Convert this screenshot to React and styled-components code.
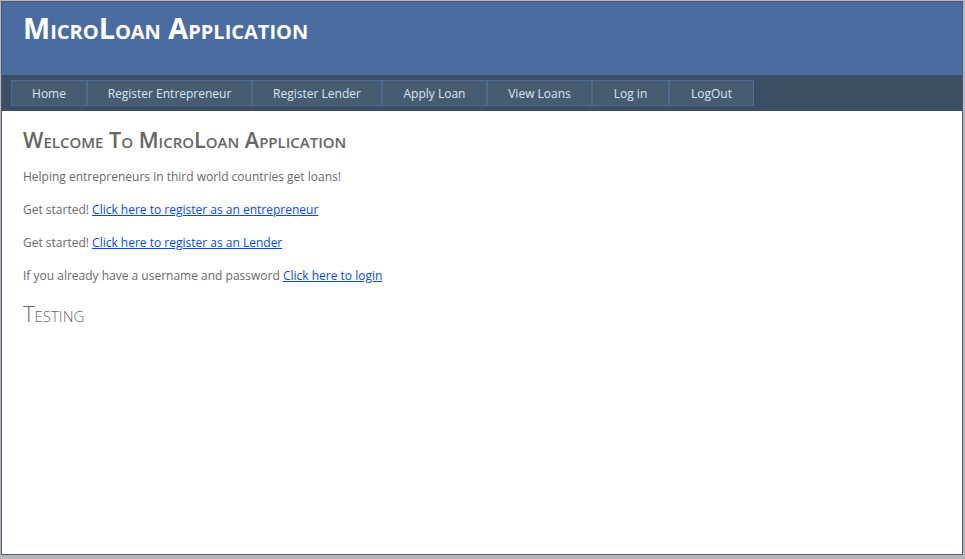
import React from "react";
import styled, { createGlobalStyle } from "styled-components";

const GlobalStyle = createGlobalStyle`
  body {
    margin: 0;
    background: #b6b7bc;
    font-family: "Open Sans", "Noto Sans", sans-serif;
    font-size: 12px;
    color: #696969;
  }
`;

const Page = styled.div`
  margin: 1px 0 0 1px;
  width: 960px;
  height: 552px;
  border: 1px solid #4a5d70;
  background: #fff;
  display: flex;
  flex-direction: column;
`;

const Header = styled.div`
  background: #4b6c9e;
`;

const Title = styled.h1`
  margin: 0;
  height: 73px;
  padding: 10px 0 0 21px;
  box-sizing: border-box;
  font-size: 28.8px;
  line-height: 32px;
  font-weight: bold;
  font-variant: small-caps;
  color: #fff;
`;

const MenuBar = styled.div`
  background: #3a4f63;
  height: 36px;
  padding: 5px 0 0 9px;
  box-sizing: border-box;
  display: flex;
`;

const MenuItem = styled.a`
  display: block;
  width: ${(props) => props.w}px;
  height: 26px;
  box-sizing: border-box;
  background: #465c71;
  border: 1px solid #4c6c96;
  border-left-color: ${(props) => (props.first ? "#4c6c96" : "#506a87")};
  color: #dde4ec;
  font-size: 12px;
  line-height: 25px;
  text-align: center;
  text-decoration: none;
  white-space: nowrap;
`;

const Main = styled.div`
  padding: 16px 21px 0;
`;

const Heading = styled.h2`
  margin: 0 0 15px;
  font-size: 21.6px;
  line-height: 26px;
  font-weight: 600;
  font-variant: small-caps;
  color: #666;
`;

const Para = styled.p`
  margin: 0 0 15px;
  line-height: 18px;
`;

const Link = styled.a`
  color: #034af3;
  text-decoration: underline;
`;

const SubHeading = styled.h2`
  margin: 0;
  font-size: 22px;
  line-height: 26px;
  font-weight: 300;
  font-variant: small-caps;
  color: #666;
`;

const menu = [
  ["Home", 76],
  ["Register Entrepreneur", 165],
  ["Register Lender", 130],
  ["Apply Loan", 105],
  ["View Loans", 105],
  ["Log in", 77],
  ["LogOut", 85],
];

const App = () => {
  return (
    <>
      <GlobalStyle />
      <Page>
        <Header>
          <Title>MicroLoan Application</Title>
          <MenuBar>
            {menu.map(([label, w], i) => (
              <MenuItem key={label} href="#" w={w} first={i === 0}>
                {label}
              </MenuItem>
            ))}
          </MenuBar>
        </Header>
        <Main>
          <Heading>Welcome To MicroLoan Application</Heading>
          <Para>Helping entrepreneurs in third world countries get loans!</Para>
          <Para>
            Get started! <Link href="#">Click here to register as an entrepreneur</Link>
          </Para>
          <Para>
            Get started! <Link href="#">Click here to register as an Lender</Link>
          </Para>
          <Para>
            If you already have a username and password{" "}
            <Link href="#">Click here to login</Link>
          </Para>
          <SubHeading>Testing</SubHeading>
        </Main>
      </Page>
    </>
  );
};

export default App;
